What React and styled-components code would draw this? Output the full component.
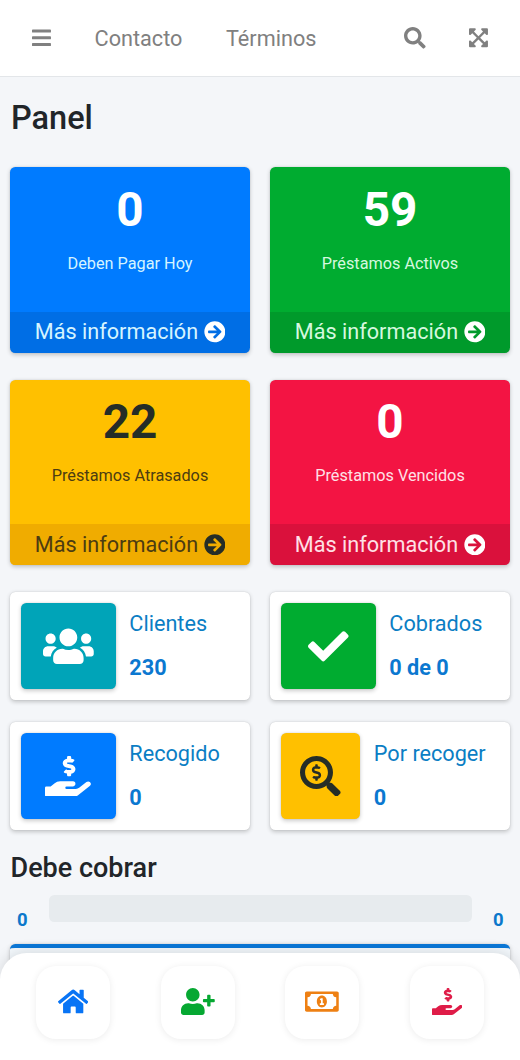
import React from "react";
import styled, { createGlobalStyle } from "styled-components";
import {
  FaBars,
  FaSearch,
  FaExpandArrowsAlt,
  FaArrowCircleRight,
  FaUsers,
  FaCheck,
  FaHandHoldingUsd,
  FaSearchDollar,
  FaHome,
  FaUserPlus,
  FaRegMoneyBillAlt,
} from "react-icons/fa";

const GlobalStyle = createGlobalStyle`
  *, *::before, *::after { box-sizing: border-box; }
  body {
    margin: 0;
    background: #f4f6f9;
    color: #212529;
    font-family: Roboto, "Liberation Sans", sans-serif;
    font-size: 21.67px;
    line-height: 1.5;
  }
  h1, h2, p { margin: 0; }
  a { color: inherit; text-decoration: none; }
`;

/* Icons share one height; $ratio is the glyph's width relative to it. */
const Glyph = styled.span`
  display: block;
  flex: none;

  svg {
    display: block;
    height: 1em;
    width: ${(p) => p.$ratio || 1}em;
  }
`;

const Screen = styled.div`
  height: 1060px;
  overflow: hidden;
`;

const Header = styled.header`
  display: flex;
  align-items: center;
  height: 77px;
  padding: 0 32px;
  background: #fff;
  border-bottom: 1px solid #e3e6e9;
  color: #808080;
`;

const NavLink = styled.a`
  margin-left: 43.6px;
  padding-top: 2px;
`;

const Tools = styled.div`
  display: flex;
  gap: 43px;
  margin-left: auto;
`;

const Title = styled.h1`
  padding: 21.5px 11px 0;
  height: 90.3px;
  font-size: 32.5px;
  font-weight: 500;
  line-height: 39px;
`;

const Grid = styled.section`
  display: grid;
  grid-template-columns: 1fr 1fr;
  column-gap: 20px;
  row-gap: ${(p) => p.$rowGap}px;
  padding: 0 10px;
  margin-bottom: ${(p) => p.$after}px;
`;

const raised = "0 0 1.3px rgba(0,0,0,.125), 0 1.3px 4px rgba(0,0,0,.2)";

const StatBox = styled.article`
  display: flex;
  flex-direction: column;
  height: 185.3px;
  border-radius: 5.4px;
  overflow: hidden;
  text-align: center;
  background: ${(p) => p.$bg};
  color: ${(p) => p.$fg};
  box-shadow: ${raised};
`;

const StatValue = styled.strong`
  margin-top: 14.5px;
  font-size: 47.7px;
  font-weight: 700;
  line-height: 57px;
`;

const StatLabel = styled.p`
  margin-top: 13px;
  font-size: 16.25px;
  line-height: 24px;
  color: ${(p) => p.$soft};
`;

const StatLink = styled.a`
  display: flex;
  align-items: center;
  justify-content: center;
  gap: 5.5px;
  height: 41px;
  margin-top: auto;
  background: ${(p) => p.$foot || "rgba(0, 0, 0, 0.1)"};
  color: ${(p) => p.$soft};

  ${Glyph} { color: ${(p) => p.$icon}; }
`;

const LinkText = styled.span`
  padding-top: 1.2px;
`;

const InfoBox = styled.article`
  display: flex;
  height: 108.2px;
  padding: 11.1px 10.8px 10.5px;
  border-radius: 5.4px;
  background: #fff;
  box-shadow: ${raised};
`;

const InfoIcon = styled.div`
  display: flex;
  align-items: center;
  justify-content: center;
  width: ${(p) => p.$width}px;
  border-radius: 5.4px;
  background: ${(p) => p.$bg};
  color: ${(p) => p.$fg};
  font-size: 40.6px;
  box-shadow: ${raised};
`;

const InfoText = styled.div`
  display: flex;
  flex-direction: column;
  justify-content: center;
  gap: 11.5px;
  padding: 0.6px 0 0 13.5px;
  color: #0b7ec4;
`;

const InfoValue = styled.strong`
  color: #0b78d0;
  font-weight: 700;
`;

const Subtitle = styled.h2`
  padding: 0 10.5px;
  font-size: 27px;
  font-weight: 500;
  line-height: 32px;
`;

const ProgressRow = styled.div`
  display: flex;
  justify-content: space-between;
  height: 49px;
  padding: 0 16.5px 0 17px;
  margin-top: 11.5px;
`;

const ProgressValue = styled.strong`
  align-self: flex-start;
  padding-top: 11.5px;
  color: #0b78cb;
  font-size: 18.5px;
  font-weight: 700;
`;

const ProgressTrack = styled.div`
  width: 423px;
  height: 27px;
  border-radius: 5.4px;
  background: #e7ebee;
`;

const Card = styled.section`
  height: 130px;
  margin: 0 10px;
  border-top: 4px solid #0b78d8;
  border-radius: 5.4px;
  background: #f4f9fd;
  box-shadow: ${raised};
`;

const BottomBar = styled.nav`
  position: fixed;
  inset: auto 0 0;
  display: grid;
  grid-template-columns: repeat(4, 1fr);
  justify-items: center;
  height: 107px;
  padding: 12.5px 11px 0;
  border-radius: 27px 27px 0 0;
  background: #fff;
  box-shadow: 0 -2px 14px rgba(0, 0, 0, 0.12);
`;

const BarButton = styled.a`
  display: flex;
  align-items: center;
  justify-content: center;
  width: 74px;
  height: 73.5px;
  padding-bottom: 1px;
  border-radius: 20px;
  background: #fff;
  color: ${(p) => p.$color};
  font-size: 27px;
  box-shadow: 0 1px 7px rgba(0, 0, 0, 0.08);
`;

const white = { fg: "#fff", icon: "#fff" };
const stats = [
  { ...white, value: "0", label: "Deben Pagar Hoy", bg: "#007bff", soft: "#d5f4ff" },
  { ...white, value: "59", label: "Préstamos Activos", bg: "#00ac30", soft: "#d5f8df" },
  { value: "22", label: "Préstamos Atrasados", bg: "#ffc000", fg: "#252d27", icon: "#252d27", soft: "#4c3c12", foot: "#f0ac00" },
  { ...white, value: "0", label: "Préstamos Vencidos", bg: "#f31443", soft: "#ffe0e6" },
];

const infos = [
  { label: "Clientes", value: "230", bg: "#00a4b8", fg: "#fff", width: 95, Icon: FaUsers, ratio: 1.25 },
  { label: "Cobrados", value: "0 de 0", bg: "#00ac30", fg: "#fff", width: 95, Icon: FaCheck },
  { label: "Recogido", value: "0", bg: "#007bff", fg: "#fff", width: 95, Icon: FaHandHoldingUsd, ratio: 1.125 },
  { label: "Por recoger", value: "0", bg: "#ffc000", fg: "#252d27", width: 79.5, Icon: FaSearchDollar },
];

const shortcuts = [
  { id: "home", color: "#0874f5", Icon: FaHome, ratio: 1.125 },
  { id: "add-client", color: "#06a832", Icon: FaUserPlus, ratio: 1.25 },
  { id: "loans", color: "#ee8013", Icon: FaRegMoneyBillAlt, ratio: 1.25 },
  { id: "collections", color: "#df1c48", Icon: FaHandHoldingUsd, ratio: 1.125 },
];

export default function App() {
  return (
    <Screen>
      <GlobalStyle />
      <Header>
        <Glyph $ratio={0.875}><FaBars /></Glyph>
        <NavLink>Contacto</NavLink>
        <NavLink>Términos</NavLink>
        <Tools>
          <Glyph><FaSearch /></Glyph>
          <Glyph $ratio={0.875}><FaExpandArrowsAlt /></Glyph>
        </Tools>
      </Header>
      <Title>Panel</Title>
      <Grid $rowGap={27} $after={26.8}>
        {stats.map((s) => (
          <StatBox key={s.label} $bg={s.bg} $fg={s.fg}>
            <StatValue>{s.value}</StatValue>
            <StatLabel $soft={s.soft}>{s.label}</StatLabel>
            <StatLink $soft={s.soft} $icon={s.icon} $foot={s.foot}>
              <LinkText>Más información</LinkText>
              <Glyph><FaArrowCircleRight /></Glyph>
            </StatLink>
          </StatBox>
        ))}
      </Grid>
      <Grid $rowGap={21.8} $after={22}>
        {infos.map(({ label, value, bg, fg, width, Icon, ratio }) => (
          <InfoBox key={label}>
            <InfoIcon $bg={bg} $fg={fg} $width={width}>
              <Glyph $ratio={ratio}><Icon /></Glyph>
            </InfoIcon>
            <InfoText>
              <span>{label}</span>
              <InfoValue>{value}</InfoValue>
            </InfoText>
          </InfoBox>
        ))}
      </Grid>
      <Subtitle>Debe cobrar</Subtitle>
      <ProgressRow>
        <ProgressValue>0</ProgressValue>
        <ProgressTrack />
        <ProgressValue>0</ProgressValue>
      </ProgressRow>
      <Card />
      <BottomBar>
        {shortcuts.map(({ id, color, Icon, ratio }) => (
          <BarButton key={id} $color={color}>
            <Glyph $ratio={ratio}><Icon /></Glyph>
          </BarButton>
        ))}
      </BottomBar>
    </Screen>
  );
}
